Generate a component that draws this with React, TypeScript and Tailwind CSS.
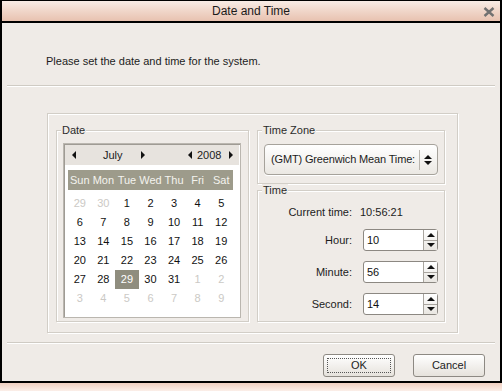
import React from "react";

const ROWS: { d: number; m?: "o" | "s" }[][] = [
  [{ d: 29, m: "o" }, { d: 30, m: "o" }, { d: 1 }, { d: 2 }, { d: 3 }, { d: 4 }, { d: 5 }],
  [{ d: 6 }, { d: 7 }, { d: 8 }, { d: 9 }, { d: 10 }, { d: 11 }, { d: 12 }],
  [{ d: 13 }, { d: 14 }, { d: 15 }, { d: 16 }, { d: 17 }, { d: 18 }, { d: 19 }],
  [{ d: 20 }, { d: 21 }, { d: 22 }, { d: 23 }, { d: 24 }, { d: 25 }, { d: 26 }],
  [{ d: 27 }, { d: 28 }, { d: 29, m: "s" }, { d: 30 }, { d: 31 }, { d: 1, m: "o" }, { d: 2, m: "o" }],
  [3, 4, 5, 6, 7, 8, 9].map((d) => ({ d, m: "o" as const })),
];

const DAYS = ["Sun", "Mon", "Tue", "Wed", "Thu", "Fri", "Sat"];

function Tri({ dir }: { dir: "l" | "r" | "u" | "d" }) {
  const pts = {
    l: "4,0 4,8 0,4",
    r: "0,0 0,8 4,4",
    u: "0,4 8,4 4,0",
    d: "0,0 8,0 4,4",
  }[dir];
  const lr = dir === "l" || dir === "r";
  return (
    <svg width={lr ? 4 : 8} height={lr ? 8 : 4} viewBox={lr ? "0 0 4 8" : "0 0 8 4"}>
      <polygon points={pts} fill="#111" />
    </svg>
  );
}

function Group({ label, className, children }: { label: string; className: string; children: React.ReactNode }) {
  return (
    <div className={`relative border border-[#d2cec7] shadow-[inset_1px_1px_0_#fff,1px_1px_0_#fff] ${className}`}>
      <span className="absolute -top-[7px] left-[4px] bg-[#efebe7] px-px text-[11px] leading-[13px] text-[#2b2b2b]">
        {label}
      </span>
      {children}
    </div>
  );
}

function Spin({ value }: { value: string }) {
  return (
    <div className="flex h-[22px] w-[75px] rounded-[3px] border border-[#8c8882] bg-white">
      <span className="flex-1 pl-[3px] text-[11px] leading-[20px] text-[#111]">{value}</span>
      <div className="flex w-[14px] flex-col border-l border-[#a9a59f] bg-gradient-to-b from-white to-[#e9e6e1]">
        <div className="flex flex-1 items-center justify-center border-b border-[#a9a59f]">
          <Tri dir="u" />
        </div>
        <div className="flex flex-1 items-center justify-center">
          <Tri dir="d" />
        </div>
      </div>
    </div>
  );
}

function Btn({ label, focus }: { label: string; focus?: boolean }) {
  return (
    <div className="flex h-[23px] w-[72px] items-center justify-center rounded-[3px] border border-[#8d8983] bg-gradient-to-b from-white to-[#e6e2dc] p-[3px]">
      <div
        className={`flex h-full w-full items-center justify-center text-[11px] text-[#222] ${
          focus ? "border border-dotted border-[#555]" : ""
        }`}
      >
        {label}
      </div>
    </div>
  );
}

export default function App() {
  return (
    <div className="flex h-[391px] w-[502px] flex-col overflow-hidden font-['Liberation_Sans',sans-serif] text-[#1c1c1c]">
      {/* title bar */}
      <div className="relative flex h-[23px] items-center justify-center border-x-2 border-t border-b-2 border-black bg-gradient-to-b from-[#f8ece6] via-[#f0d6c9] to-[#e8c2b0]">
        <span className="text-[12px] text-[#1a1a1a]">Date and Time</span>
        <svg className="absolute right-[5px] top-[6px]" width="12" height="10" viewBox="0 0 12 10">
          <path d="M1.5 1 L10.5 9 M10.5 1 L1.5 9" stroke="#717171" strokeWidth="2.4" />
        </svg>
      </div>

      {/* body */}
      <div className="flex flex-1 flex-col border-x-2 border-black bg-[#efebe7]">
        <p className="pl-[44px] pt-[32px] text-[11px] leading-[13px]">
          Please set the date and time for the system.
        </p>
        <div className="mx-[5px] mt-[17px] h-[2px] border-t border-[#cfcbc4] border-b border-b-white" />

        {/* main frame */}
        <div className="ml-[45px] mt-[26px] flex h-[220px] w-[411px] gap-[8px] border border-[#d2cec7] pl-[8px] pt-[16px] shadow-[inset_1px_1px_0_#fff,1px_1px_0_#fff]">
          <Group label="Date" className="h-[192px] w-[193px]">
            <div className="ml-[6px] mt-[12px] h-[175px] w-[178px] border border-[#bab6af] bg-white shadow-[inset_1px_1px_0_#9f9b94]">
              <div className="mx-px mt-px flex h-[20px] items-center bg-[#e7e3de] text-[11px]">
                <span className="ml-[7px]"><Tri dir="l" /></span>
                <span className="ml-[27px] w-[32px]">July</span>
                <span className="ml-[6px]"><Tri dir="r" /></span>
                <span className="ml-[43px]"><Tri dir="l" /></span>
                <span className="ml-[5px]">2008</span>
                <span className="ml-[8px]"><Tri dir="r" /></span>
              </div>
              <div className="ml-[4px] mt-[5px] grid h-[20px] w-[165px] grid-cols-7 items-center bg-[#9d9b8b] text-center text-[11px] text-[#f4f3ee]">
                {DAYS.map((d) => (
                  <span key={d}>{d}</span>
                ))}
              </div>
              <div className="ml-[4px] mt-[4px] grid w-[165px] grid-cols-7 text-center text-[11px]">
                {ROWS.flat().map((c, i) => (
                  <span
                    key={i}
                    className={`h-[19px] leading-[19px] ${
                      c.m === "o"
                        ? "text-[#cbc9c5]"
                        : c.m === "s"
                        ? "bg-[#8f8d7e] text-white"
                        : "text-[#111]"
                    }`}
                  >
                    {c.d}
                  </span>
                ))}
              </div>
            </div>
          </Group>

          <div className="flex flex-col gap-[6px]">
            <Group label="Time Zone" className="h-[54px] w-[188px]">
              <div className="ml-[6px] mt-[13px] flex h-[31px] w-[174px] items-center rounded-[4px] border border-[#a6a29b] bg-gradient-to-b from-white to-[#ebe8e3] shadow-[0_1px_0_#fff]">
                <span className="w-[154px] whitespace-nowrap pl-[6px] text-[11px] tracking-[-0.15px]">
                  (GMT) Greenwich Mean Time:
                </span>
                <span className="h-[20px] border-l border-[#b9b5ae]" />
                <span className="ml-[4px] flex flex-col gap-[2px]">
                  <Tri dir="u" />
                  <Tri dir="d" />
                </span>
              </div>
            </Group>
            <Group label="Time" className="h-[132px] w-[188px]">
              <div className="grid grid-cols-[94px_75px] items-center gap-x-[11px] gap-y-[10px] pt-[14px] text-[11px]">
                <span className="text-right leading-[14px]">Current time:</span>
                <span className="-ml-[3px] leading-[14px]">10:56:21</span>
                <span className="text-right">Hour:</span>
                <Spin value="10" />
                <span className="text-right">Minute:</span>
                <Spin value="56" />
                <span className="text-right">Second:</span>
                <Spin value="14" />
              </div>
            </Group>
          </div>
        </div>

        <div className="mx-[5px] mt-[9px] h-[2px] border-t border-[#cfcbc4] border-b border-b-white" />

        <div className="mt-[10px] flex justify-end gap-[18px] pr-[15px]">
          <Btn label="OK" focus />
          <Btn label="Cancel" />
        </div>
      </div>

      {/* bottom edge */}
      <div className="h-[2px] bg-black" />
      <div className="h-[8px] bg-gradient-to-b from-[#efcfc0] to-[#fbefe9]" />
    </div>
  );
}
